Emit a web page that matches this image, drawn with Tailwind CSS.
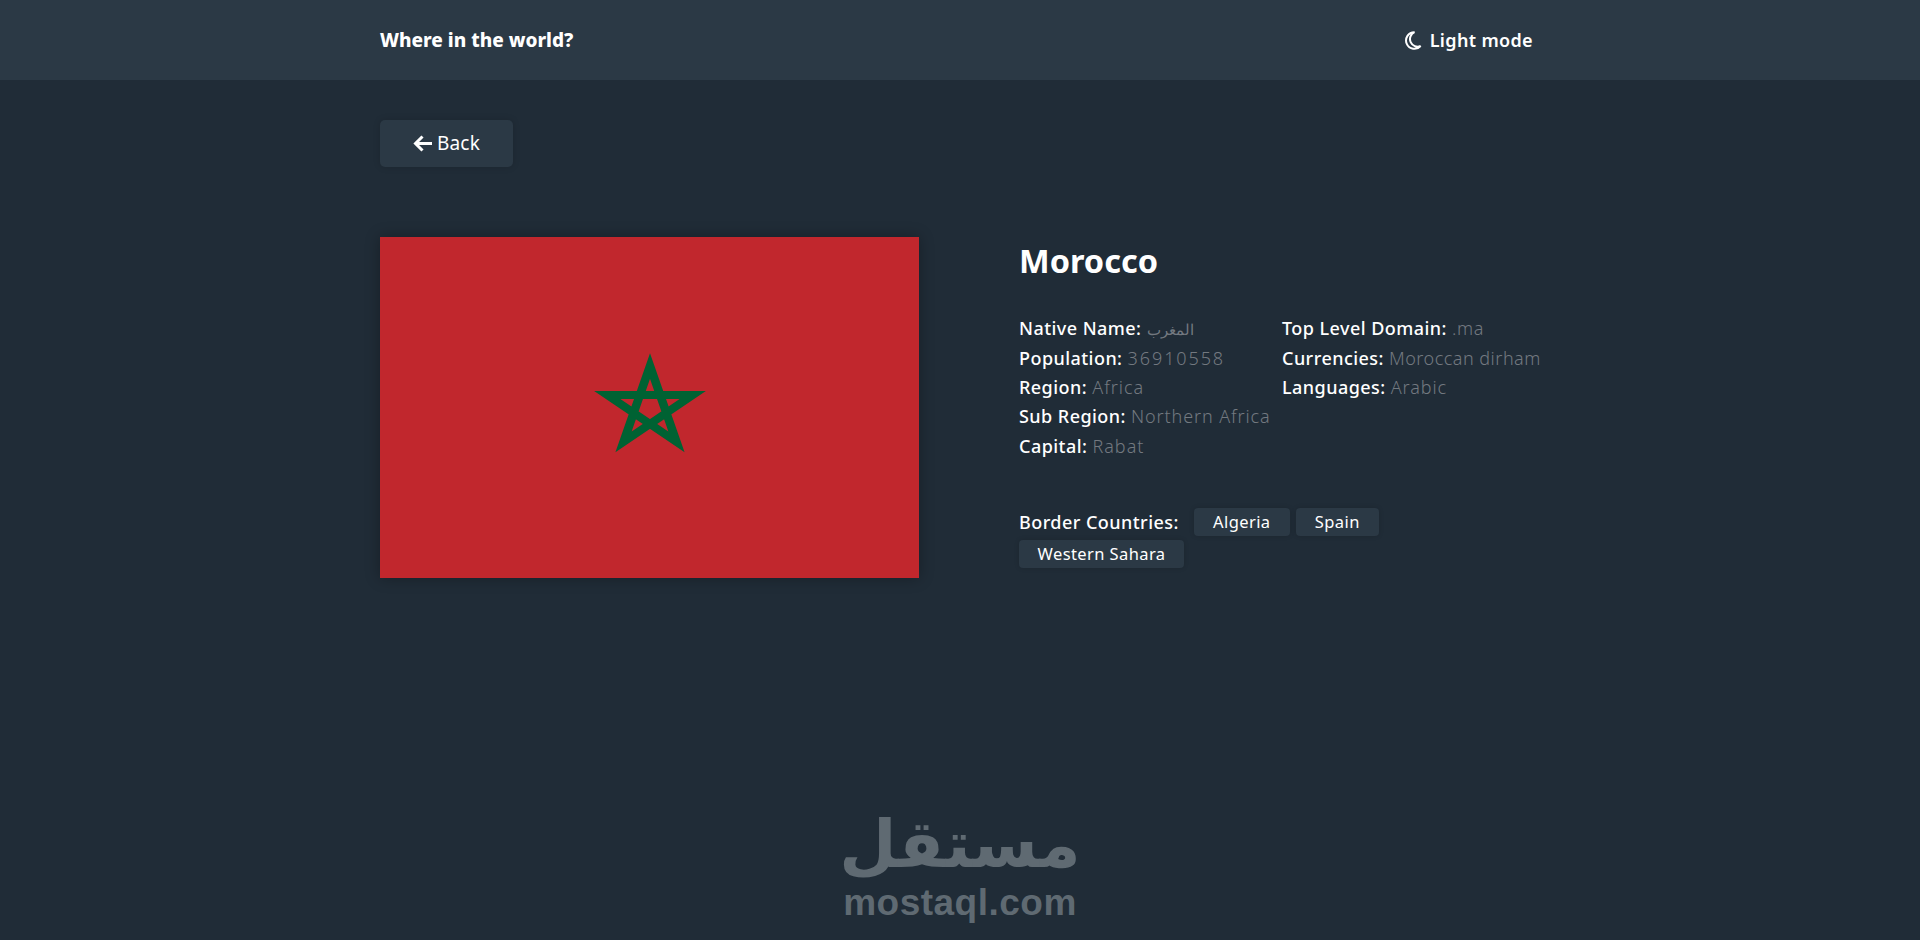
<!DOCTYPE html>
<html lang="en">
<head>
    <meta charset="UTF-8">
    <meta name="viewport" content="width=device-width, initial-scale=1.0">
    <title>Where in the world?</title>
    <script src="https://cdn.jsdelivr.net/npm/@tailwindcss/browser@4"></script>
</head>
<body class="relative h-[940px] overflow-hidden bg-[#202c37] font-['Noto_Sans','Lato',sans-serif] text-white">
    <!-- Header -->
    <header class="h-[80px] bg-[#2b3945]">
        <div class="flex h-full w-[1153px] ml-[380px] items-center justify-between">
            <h1 class="text-[19px] font-extrabold">Where in the world?</h1>
            <button class="flex items-center gap-[8px] text-[18px] font-semibold tracking-[0.35px]">
                <svg class="h-[19px] w-[17px]" viewBox="0 0 17 19" fill="none" stroke="white" stroke-width="2">
                    <path d="M9.5 1.2A8.3 8.3 0 1 0 15.6 15a7.2 7.2 0 0 1-6.1-13.8Z"/>
                </svg>
                Light mode
            </button>
        </div>
    </header>

    <main class="ml-[380px] w-[1160px]">
        <!-- Back -->
        <button class="mt-[40px] flex h-[47px] w-[133px] items-center justify-center gap-[5px] rounded-[5px] bg-[#2b3945] text-[19px] font-normal tracking-[0.2px] shadow-[0_0_7px_rgba(0,0,0,0.15)]">
            <svg class="h-[17px] w-[19px]" viewBox="0 0 19 17" fill="none" stroke="white" stroke-width="3">
                <path d="M19 8.5H3M9.5 1.5 2.5 8.5l7 7"/>
            </svg>
            Back
        </button>

        <!-- Country -->
        <section class="mt-[70px] flex">
            <div class="flex h-[341px] w-[539px] shrink-0 items-center justify-center bg-[#c1272d] shadow-[0_0_14px_rgba(0,0,0,0.3)]">
                <svg class="h-[112px] w-[120px]" viewBox="-60 -60 120 120" preserveAspectRatio="none" fill="none" stroke="#006233" stroke-width="8.5" stroke-miterlimit="20">
                    <path d="M0-45 26.5 36.4-42.8-13.9H42.8L-26.5 36.4Z"/>
                </svg>
            </div>

            <div class="ml-[100px]">
                <h2 class="mt-[4px] text-[32.5px] leading-[40px] font-bold">Morocco</h2>

                <div class="mt-[33px] flex text-[18px] leading-[29px] font-medium tracking-[0.45px]">
                    <div class="w-[263px] shrink-0">
                        <p class="h-[30px]">Native Name: <span class="font-['DejaVu_Sans'] text-[15px] font-light tracking-normal text-[#737980]">المغرب</span></p>
                        <p class="h-[29px]">Population: <span class="font-light tracking-[1.9px] text-[#737980]">36910558</span></p>
                        <p class="h-[29px]">Region: <span class="font-light tracking-[1px] text-[#737980]">Africa</span></p>
                        <p class="h-[30px]">Sub Region: <span class="font-light tracking-[0.9px] text-[#737980]">Northern Africa</span></p>
                        <p class="h-[29px]">Capital: <span class="font-light tracking-[1px] text-[#737980]">Rabat</span></p>
                    </div>
                    <div class="whitespace-nowrap">
                        <p class="h-[30px]">Top Level Domain: <span class="font-light tracking-[0.7px] text-[#737980]">.ma</span></p>
                        <p class="h-[29px]">Currencies: <span class="font-light tracking-[0.5px] text-[#737980]">Moroccan dirham</span></p>
                        <p class="h-[29px]">Languages: <span class="font-light tracking-[0.9px] text-[#737980]">Arabic</span></p>
                    </div>
                </div>

                <div class="mt-[47px] w-[400px] text-[18px]">
                    <div class="flex flex-wrap items-center gap-x-[6px] gap-y-[4px]">
                        <span class="mr-[9px] font-medium tracking-[0.45px]">Border Countries:</span>
                        <span class="flex h-[28px] w-[96px] items-center justify-center rounded-[4px] bg-[#2b3945] text-[16.5px] font-normal tracking-[0.4px] shadow-[0_0_5px_rgba(0,0,0,0.15)]">Algeria</span>
                        <span class="flex h-[28px] w-[83px] items-center justify-center rounded-[4px] bg-[#2b3945] text-[16.5px] font-normal tracking-[0.4px] shadow-[0_0_5px_rgba(0,0,0,0.15)]">Spain</span>
                        <span class="flex h-[28px] w-[165px] items-center justify-center rounded-[4px] bg-[#2b3945] text-[16.5px] font-normal tracking-[0.4px] shadow-[0_0_5px_rgba(0,0,0,0.15)]">Western Sahara</span>
                    </div>
                </div>
            </div>
        </section>
    </main>

    <!-- Watermark -->
    <div class="absolute left-[845px] top-[806px] flex w-[230px] flex-col items-center text-[#5f6a72]">
        <span class="font-['DejaVu_Sans'] text-[66px] leading-[78px] font-bold">مستقل</span>
        <span class="font-['Liberation_Sans'] text-[37px] leading-[38px] font-bold tracking-[0.5px]">mostaql.com</span>
    </div>
</body>
</html>
